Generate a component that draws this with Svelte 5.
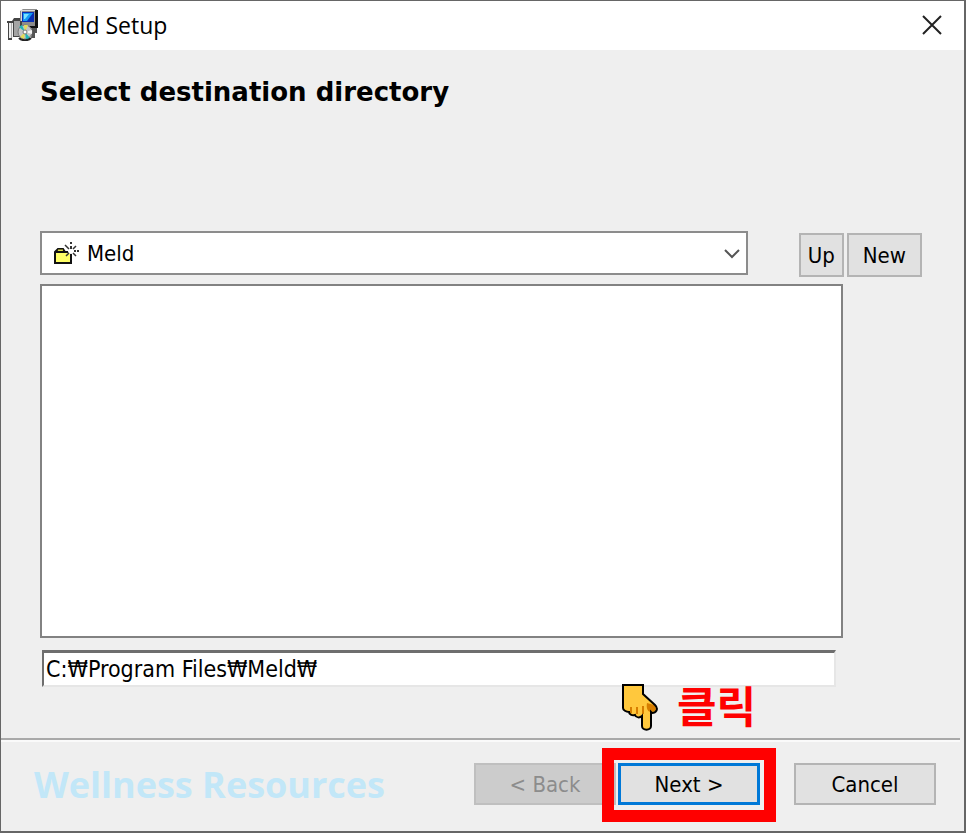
<script>
    let folder = 'Meld';
    let folders = ['Meld'];
    let path = 'C:₩Program Files₩Meld₩';
</script>

<main class="window">
    <header class="titlebar">
        <svg class="app-icon" width="32" height="32" viewBox="0 0 32 32" aria-hidden="true">
            <!-- monitor -->
            <path d="M13 2l3-2h14v18h-4v4h-9v-4h-4z" fill="#8c8c8c" />
            <path d="M28 1h3v17h-3zM15 17h16v2H15z" fill="#111" />
            <path d="M14 1h14v1H15v14h-1z" fill="#d8d8d8" />
            <rect x="15" y="3" width="12" height="10" fill="#0a2fb4" />
            <path d="M16 4h10l-6 8h-4z" fill="#149cf5" />
            <path d="M17 5h5l-4 5h-1z" fill="#7ce2ff" />
            <path d="M25 19h5v5h-2v5h-4z" fill="#555" />
            <!-- box -->
            <path d="M0 12h5l2-3h6v3h2v16H5v3H1V14H0z" fill="#444" />
            <path d="M2 14h4v15H2z" fill="#eee" />
            <path d="M7 12h6v15H7z" fill="#a4a4a4" />
            <path d="M4 14h1v15H4z" fill="#aaa" />
            <!-- disc -->
            <circle cx="18" cy="23" r="7" fill="#c4c4c4" stroke="#777" />
            <path d="M18 23l-6-5 3-2zM18 23l5 6-4 2z" fill="#20b5b5" />
            <path d="M18 23l-1-7h4zM18 23l-1 7-4-2z" fill="#e4dc55" />
            <path d="M18 23l7-2v4z" fill="#f5f5f5" />
            <circle cx="18" cy="23" r="2" fill="#fff" stroke="#777" />
            <path d="M12 29c3 3 9 3 12 0" fill="none" stroke="#222" stroke-width="2" />
        </svg>
        <span class="title">Meld Setup</span>
        <button class="close" aria-label="Close">
            <svg width="20" height="20" viewBox="0 0 20 20">
                <path d="M1 1l18 18M19 1L1 19" stroke="#222" stroke-width="2" />
            </svg>
        </button>
    </header>

    <section class="content">
        <h1>Select destination directory</h1>

        <div class="toolbar">
            <div class="combo">
                <select aria-label="Folder" bind:value={folder}>
                    {#each folders as name}
                        <option value={name}>{name}</option>
                    {/each}
                </select>
                <svg class="folder" width="26" height="24" viewBox="0 0 26 24" aria-hidden="true">
                    <path d="M2 11l3-3h5l2 3h6v11H2z" fill="#ffff66" stroke="#111" stroke-width="2" />
                    <path d="M3 11h12" stroke="#111" stroke-width="2" />
                    <path d="M5 9h5" stroke="#cccc33" />
                    <circle cx="18" cy="10" r="3" fill="#fff" />
                    <path d="M12 4l4 4M23 5l-3 3M16 12l-3 3M20 12l3 3" stroke="#333" stroke-width="1.5" />
                    <path d="M18 1v2M18 5v3M21 10h2M24 10h2" stroke="#333" stroke-width="2" />
                </svg>
                <svg class="arrow" width="16" height="10" viewBox="0 0 16 10" aria-hidden="true">
                    <path d="M1 1l7 7 7-7" fill="none" stroke="#555" stroke-width="2" />
                </svg>
            </div>
            <div class="tools">
                <button class="btn">Up</button>
                <button class="btn">New</button>
            </div>
        </div>

        <select class="list" size="8" aria-label="Directories"></select>

        <input class="path" type="text" aria-label="Destination path" bind:value={path} />
    </section>

    <footer>
        <span class="brand">Wellness Resources</span>
        <button class="btn wide" disabled>&lt; Back</button>
        <div class="next">
            <button class="btn wide primary">Next &gt;</button>
            <div class="frame"></div>
            <div class="hint">
                <svg width="37" height="48" viewBox="0 0 37 48" aria-hidden="true">
                    <path d="M1 1h20v9l12 11c4 4 1 8-3 8l-1-1v14c0 5-9 5-9 0V32c-2 2-6 2-7-1-3 1-6-1-6-3-3 0-6-2-6-4z" fill="#ffc83d" />
                    <path d="M25 19l7 2c4 4 1 7-3 7-3 0-5-3-4-9z" fill="#d67d00" />
                    <path d="M9 23v6M15 23v7M21 22v8" stroke="#d67d00" stroke-width="2" />
                    <path d="M1 1h20v9l12 11c4 4 1 8-3 8l-1-1v14c0 5-9 5-9 0V32c-2 2-6 2-7-1-3 1-6-1-6-3-3 0-6-2-6-4z" fill="none" stroke="#000" stroke-width="2" />
                </svg>
                <span>클릭</span>
            </div>
        </div>
        <button class="btn wide">Cancel</button>
    </footer>
</main>

<style>
    :global(body) {
        margin: 0;
        background: #efefef;
    }

    .window {
        box-sizing: border-box;
        min-height: 100vh;
        display: flex;
        flex-direction: column;
        border: 1px solid #666;
        border-right-width: 2px;
        border-bottom-width: 2px;
        background: #efefef;
        color: #000;
        font-family: "DejaVu Sans Condensed", Tahoma, sans-serif;
        font-size: 22px;
    }

    .titlebar {
        display: flex;
        align-items: center;
        gap: 7px;
        height: 48px;
        padding: 0 22px 1px 6px;
        background: #fff;
    }

    .title {
        flex: 1;
        font-family: "Open Sans", "Noto Sans", sans-serif;
        font-size: 23px;
    }

    .close {
        display: flex;
        padding: 0;
        border: 0;
        background: none;
    }

    .content {
        flex: 1;
        display: flex;
        flex-direction: column;
        padding: 24px 121px 0 39px;
    }

    h1 {
        margin: 0 0 121px;
        font-family: "DejaVu Sans", Verdana, sans-serif;
        font-size: 26px;
        line-height: 36px;
        font-weight: bold;
    }

    .toolbar {
        display: flex;
        align-items: flex-end;
        gap: 51px;
        margin-right: -79px;
    }

    .combo {
        position: relative;
        flex: 1;
    }

    .combo select {
        appearance: none;
        box-sizing: border-box;
        display: block;
        width: 100%;
        height: 44px;
        padding: 0 40px 0 45px;
        border: 2px solid #8c8c8c;
        border-radius: 0;
        background: #fff;
        color: #000;
        font: inherit;
    }

    .folder {
        position: absolute;
        left: 13px;
        top: 10px;
        pointer-events: none;
    }

    .arrow {
        position: absolute;
        right: 8px;
        top: 18px;
        pointer-events: none;
    }

    .tools {
        display: flex;
        gap: 3px;
        margin-bottom: -2px;
    }

    .btn {
        box-sizing: border-box;
        height: 44px;
        padding: 0 14px;
        border: 2px solid #b4b4b4;
        border-radius: 0;
        background: #e1e1e1;
        color: #000;
        font: inherit;
    }

    .tools .btn:first-child {
        padding: 0 7px;
    }

    .list {
        appearance: none;
        box-sizing: border-box;
        width: 100%;
        height: 354px;
        margin: 9px 0 12px;
        border: 2px solid #828282;
        border-radius: 0;
        background: #fff;
    }

    .path {
        box-sizing: border-box;
        height: 37px;
        margin: 0 7px 0 2px;
        padding: 0 2px;
        border: 2px solid #6e6e6e;
        border-top-width: 3px;
        border-right-color: #e6e6e6;
        border-bottom-color: #e6e6e6;
        border-radius: 0;
        background: #fff;
        color: #000;
        font: inherit;
        font-size: 23px;
    }

    footer {
        display: flex;
        align-items: center;
        height: 88px;
        margin-right: 4px;
        padding: 0 24px 3px 33px;
        border-top: 2px solid #a9a9a9;
        box-shadow: inset 0 2px #fafafa;
    }

    .brand {
        flex: 1;
        color: #c2e7f8;
        font-family: "Open Sans", "Noto Sans", sans-serif;
        font-size: 36px;
        font-weight: bold;
        white-space: nowrap;
    }

    .wide {
        width: 142px;
        height: 42px;
    }

    .btn:disabled {
        border-color: #bfbfbf;
        background: #ccc;
        color: #8c8c8c;
    }

    .primary {
        border: 3px solid #0078d7;
    }

    .next {
        position: relative;
        display: flex;
        margin: 0 34px 0 2px;
    }

    /* red marker around the button to press */
    .frame {
        position: absolute;
        inset: -15px -16px -17px;
        border: 12px solid #f00;
        pointer-events: none;
    }

    .hint {
        position: absolute;
        left: 4px;
        bottom: 73px;
        display: flex;
        align-items: flex-start;
        gap: 18px;
        color: #f00;
        font-family: "Noto Sans CJK KR", sans-serif;
        font-size: 43px;
        font-weight: bold;
        line-height: 40px;
        white-space: nowrap;
        pointer-events: none;
    }
</style>
